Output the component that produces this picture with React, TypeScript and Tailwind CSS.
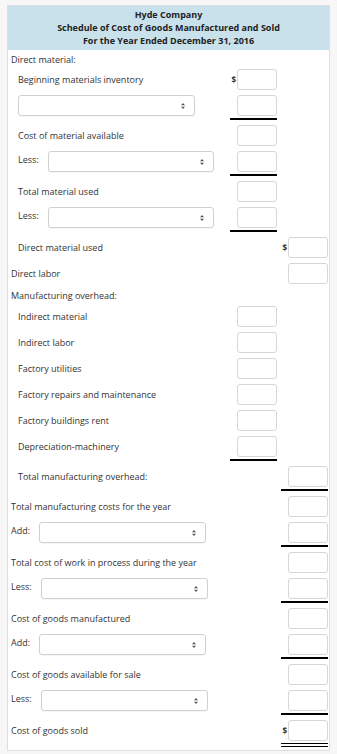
import React from "react";

type Line = "none" | "single" | "double";
type CellSpec = { on?: boolean; dollar?: boolean; line?: Line };

function Input() {
  return <div className="w-[40px] h-[21px] border border-[#d6d6d6] rounded-[3px] bg-white" />;
}

function Cell({ spec }: { spec?: CellSpec }) {
  return (
    <div className="w-[47px] flex flex-col shrink-0">
      <div className="h-[21px] flex items-center justify-end">
        {spec?.dollar && (
          <span className="text-[8px] font-bold text-[#333] mr-[1px] leading-none">$</span>
        )}
        {spec?.on && <Input />}
      </div>
      {spec?.line === "single" && <div className="mt-[2px] h-[2px] bg-black" />}
      {spec?.line === "double" && <div className="mt-[2px] h-[4px] border-y border-black" />}
    </div>
  );
}

function SelectBox({ w }: { w: string }) {
  return (
    <div
      className={`${w} h-[21px] border border-[#d0d0d0] rounded-[3px] bg-white flex items-center justify-end pr-[9px] shadow-[0_1px_1px_rgba(0,0,0,0.04)]`}
    >
      <svg width="4" height="6" viewBox="0 0 4 6">
        <path d="M2 0 L4 2.3 L0 2.3 Z" fill="#555" />
        <path d="M0 3.7 L4 3.7 L2 6 Z" fill="#555" />
      </svg>
    </div>
  );
}

type RowProps = {
  mt: string;
  label?: string;
  indent?: boolean;
  select?: "none" | "plain" | "labeled";
  selW?: string;
  c1?: CellSpec;
  c2?: CellSpec;
};

function Row({ mt, label, indent, select = "none", selW = "w-[167px]", c1, c2 }: RowProps) {
  return (
    <div className={`flex items-start ${mt}`}>
      <div className={`flex-1 flex items-start ${indent ? "pl-[10px]" : "pl-[3px]"}`}>
        {select === "none" && (
          <span className="text-[9px] leading-[21px] h-[21px] text-[#333] whitespace-nowrap">{label}</span>
        )}
        {select === "plain" && <SelectBox w={selW} />}
        {select === "labeled" && (
          <div className="flex items-start gap-[9px]">
            <span className="text-[9px] leading-[12px] mt-[3px] text-[#333]">{label}</span>
            <SelectBox w={selW} />
          </div>
        )}
      </div>
      <Cell spec={c1} />
      <div className="w-[4px] shrink-0" />
      <Cell spec={c2} />
    </div>
  );
}

function LabelRow({ mt, label }: { mt: string; label: string }) {
  return (
    <div className={`${mt} pl-[3px] h-[12px] text-[9px] leading-[12px] text-[#333]`}>{label}</div>
  );
}

export default function App() {
  const in1: CellSpec = { on: true };
  const in1u: CellSpec = { on: true, line: "single" };
  const in2: CellSpec = { on: true };
  const in2u: CellSpec = { on: true, line: "single" };
  return (
    <div className="min-h-screen bg-[#f7f7f7] pt-[5px] pl-[7px] font-['Open_Sans',sans-serif]">
      <div className="w-[323px] border border-[#dedede] bg-white pb-[3px]">
        <div className="bg-[#c9e1eb] pt-[2px] pb-[2px] text-center font-bold text-[9px] text-[#222]">
          <div className="h-[13px] leading-[13px]">Hyde Company</div>
          <div className="h-[13px] leading-[13px]">Schedule of Cost of Goods Manufactured and Sold</div>
          <div className="h-[14px] leading-[14px]">For the Year Ended December 31, 2016</div>
        </div>
        <div className="pr-[1px]">
          <LabelRow mt="mt-[4px]" label="Direct material:" />
          <Row mt="mt-[3px]" indent label="Beginning materials inventory" c1={{ on: true, dollar: true }} />
          <Row mt="mt-[5px]" indent select="plain" selW="w-[177px]" c1={in1u} />
          <Row mt="mt-[5px]" indent label="Cost of material available" c1={in1} />
          <Row mt="mt-[5px]" indent select="labeled" label="Less:" selW="w-[166px]" c1={in1u} />
          <Row mt="mt-[5px]" indent label="Total material used" c1={in1} />
          <Row mt="mt-[5px]" indent select="labeled" label="Less:" selW="w-[166px]" c1={in1u} />
          <Row mt="mt-[5px]" indent label="Direct material used" c2={{ on: true, dollar: true }} />
          <Row mt="mt-[5px]" label="Direct labor" c2={in2} />
          <LabelRow mt="mt-[6px]" label="Manufacturing overhead:" />
          <Row mt="mt-[4px]" indent label="Indirect material" c1={in1} />
          <Row mt="mt-[5px]" indent label="Indirect labor" c1={in1} />
          <Row mt="mt-[5px]" indent label="Factory utilities" c1={in1} />
          <Row mt="mt-[5px]" indent label="Factory repairs and maintenance" c1={in1} />
          <Row mt="mt-[5px]" indent label="Factory buildings rent" c1={in1} />
          <Row mt="mt-[5px]" indent label="Depreciation-machinery" c1={in1u} />
          <Row mt="mt-[5px]" indent label="Total manufacturing overhead:" c2={in2u} />
          <Row mt="mt-[5px]" label="Total manufacturing costs for the year" c2={in2} />
          <Row mt="mt-[5px]" select="labeled" label="Add:" c2={in2u} />
          <Row mt="mt-[5px]" label="Total cost of work in process during the year" c2={in2} />
          <Row mt="mt-[5px]" select="labeled" label="Less:" c2={in2u} />
          <Row mt="mt-[5px]" label="Cost of goods manufactured" c2={in2} />
          <Row mt="mt-[5px]" select="labeled" label="Add:" c2={in2u} />
          <Row mt="mt-[5px]" label="Cost of goods available for sale" c2={in2} />
          <Row mt="mt-[5px]" select="labeled" label="Less:" c2={in2u} />
          <Row mt="mt-[5px]" label="Cost of goods sold" c2={{ on: true, dollar: true, line: "double" }} />
        </div>
      </div>
    </div>
  );
}
